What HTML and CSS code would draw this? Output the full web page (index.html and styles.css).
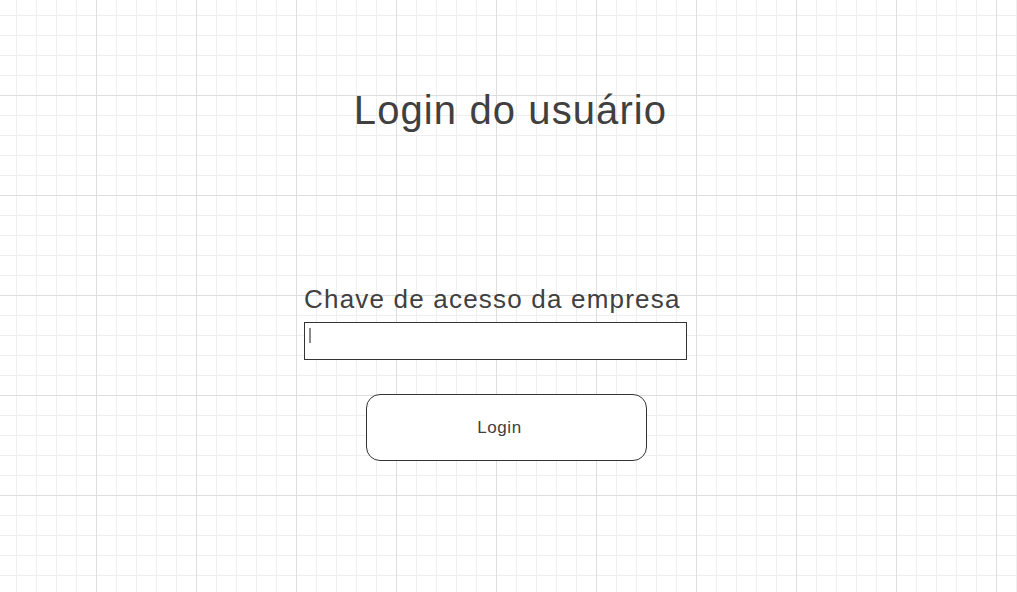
FILE: index.html
```html
<!DOCTYPE html>
<html lang="pt">
<head>
<meta charset="utf-8">
<title>Login do usuário</title>
<link rel="stylesheet" href="styles.css">
</head>
<body>
<main class="page">
  <h1 class="title">Login do usuário</h1>
  <div class="form">
    <label class="label" for="chave">Chave de acesso da empresa</label>
    <div class="field" id="chave"><span class="caret"></span></div>
  </div>
  <button class="btn" type="button">Login</button>
</main>
</body>
</html>
```
FILE: styles.css
```css
html, body {
  margin: 0;
  padding: 0;
}
body {
  width: 1017px;
  height: 592px;
  overflow: hidden;
  background-color: #ffffff;
  background-image:
    linear-gradient(to right, #dedede 1px, transparent 1px),
    linear-gradient(to bottom, #dedede 1px, transparent 1px),
    linear-gradient(to right, #efefef 1px, transparent 1px),
    linear-gradient(to bottom, #efefef 1px, transparent 1px);
  background-size: 100px 100px, 100px 100px, 20px 20px, 20px 20px;
  background-position: 96px 0, 0 95px, 16px 0, 0 15px;
  font-family: "Liberation Sans", Arial, Helvetica, sans-serif;
  color: #404040;
}
.page {
  display: flex;
  flex-direction: column;
  align-items: flex-start;
  padding-top: 87px;
}
.title {
  align-self: stretch;
  margin: 0 0 0 4px;
  text-align: center;
  font-size: 40px;
  line-height: 46px;
  letter-spacing: 1.1px;
  font-weight: normal;
  color: #404040;
}
.form {
  display: flex;
  flex-direction: column;
  margin: 151px 0 0 304px;
  width: 383px;
}
.label {
  font-size: 26px;
  line-height: 30px;
  letter-spacing: 1.2px;
  margin-bottom: 8px;
  color: #404040;
  white-space: nowrap;
}
.field {
  box-sizing: border-box;
  width: 383px;
  height: 38px;
  border: 1px solid #333333;
  background: #ffffff;
  display: flex;
  align-items: flex-start;
  padding: 5px 0 0 4px;
}
.caret {
  display: block;
  width: 2px;
  height: 15px;
  background: #8a8a8a;
}
.btn {
  box-sizing: border-box;
  margin: 34px 0 0 366px;
  width: 281px;
  height: 67px;
  border: 1px solid #333333;
  border-radius: 14px;
  background: #ffffff;
  font-family: "Liberation Sans", Arial, Helvetica, sans-serif;
  font-size: 17px;
  letter-spacing: 0.6px;
  color: #404040;
  padding: 0 14px 0 0;
}
```
